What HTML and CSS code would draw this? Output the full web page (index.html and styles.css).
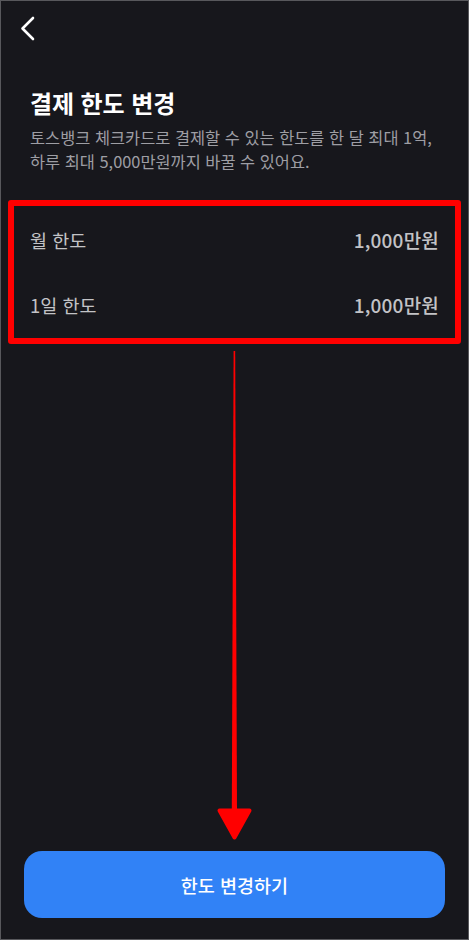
FILE: index.html
```html
<!DOCTYPE html>
<html lang="ko">
<head>
<meta charset="utf-8">
<title>결제 한도 변경</title>
<link rel="stylesheet" href="styles.css">
</head>
<body>
<div class="frame">
  <header class="nav">
    <svg class="back" width="20" height="28" viewBox="0 0 20 28">
      <polyline points="13,3 2.5,13.5 13,24" fill="none" stroke="#ffffff" stroke-width="2.6" stroke-linecap="round" stroke-linejoin="round"/>
    </svg>
  </header>
  <section class="intro">
    <h1 class="title">결제 한도 변경</h1>
    <p class="desc">토스뱅크 체크카드로 결제할 수 있는 한도를 한 달 최대 1억,<br>하루 최대 5,000만원까지 바꿀 수 있어요.</p>
  </section>
  <section class="limits">
    <div class="row"><span class="label">월 한도</span><span class="value">1,000만원</span></div>
    <div class="row"><span class="label">1일 한도</span><span class="value">1,000만원</span></div>
  </section>
  <div class="spacer"></div>
  <footer class="bottom">
    <button class="cta">한도 변경하기</button>
  </footer>
  <svg class="arrow" width="469" height="940" viewBox="0 0 469 940">
    <polygon points="233.6,351 235.2,351 237,812 231.8,812" fill="#ff0000"/>
    <polygon points="219.5,810.5 249.5,810.5 234.5,837.5" fill="#ff0000" stroke="#ff0000" stroke-width="4" stroke-linejoin="round"/>
  </svg>
</div>
</body>
</html>
```
FILE: styles.css
```css
* { box-sizing: border-box; }
html, body { margin: 0; padding: 0; }
body {
  background: #17171c;
  font-family: "Noto Sans CJK KR", "Noto Sans", sans-serif;
}
.frame {
  position: relative;
  width: 469px;
  height: 940px;
  border: 1px solid #58585c;
  background: #17171c;
  display: flex;
  flex-direction: column;
  overflow: hidden;
}
.nav {
  height: 56px;
  padding: 14px 0 0 19px;
}
.back { display: block; }
.intro {
  padding: 30px 29px 0;
}
.title {
  margin: 0;
  font-size: 24px;
  line-height: 32px;
  font-weight: 700;
  color: #ffffff;
  letter-spacing: -0.1px;
}
.desc {
  margin: 6px 0 0;
  font-size: 16.4px;
  line-height: 24px;
  font-weight: 400;
  color: #9e9ea4;
  letter-spacing: 0;
}
.limits {
  position: relative;
  margin: 33px 0 0;
  padding: 1px 29px 1px;
}
.limits::after {
  content: "";
  position: absolute;
  left: 7px;
  right: 7px;
  top: -6px;
  bottom: -6px;
  border: 6px solid #ff0000;
  border-radius: 3px;
  pointer-events: none;
}
.row {
  height: 65px;
  display: flex;
  align-items: center;
  justify-content: space-between;
}
.label {
  font-size: 18.5px;
  color: #c3c3c6;
  font-weight: 400;
}
.value {
  font-size: 19px;
  color: #c3c3c6;
  font-weight: 500;
  letter-spacing: 0.2px;
}
.spacer { flex: 1; }
.bottom {
  padding: 0 23px 21px;
}
.cta {
  display: block;
  width: 100%;
  height: 67px;
  border: none;
  border-radius: 18px;
  background: #3182f6;
  color: #ffffff;
  font-family: "Noto Sans CJK KR", "Noto Sans", sans-serif;
  font-size: 18.5px;
  font-weight: 500;
}
.arrow {
  position: absolute;
  left: -1px;
  top: -1px;
  pointer-events: none;
}
```
